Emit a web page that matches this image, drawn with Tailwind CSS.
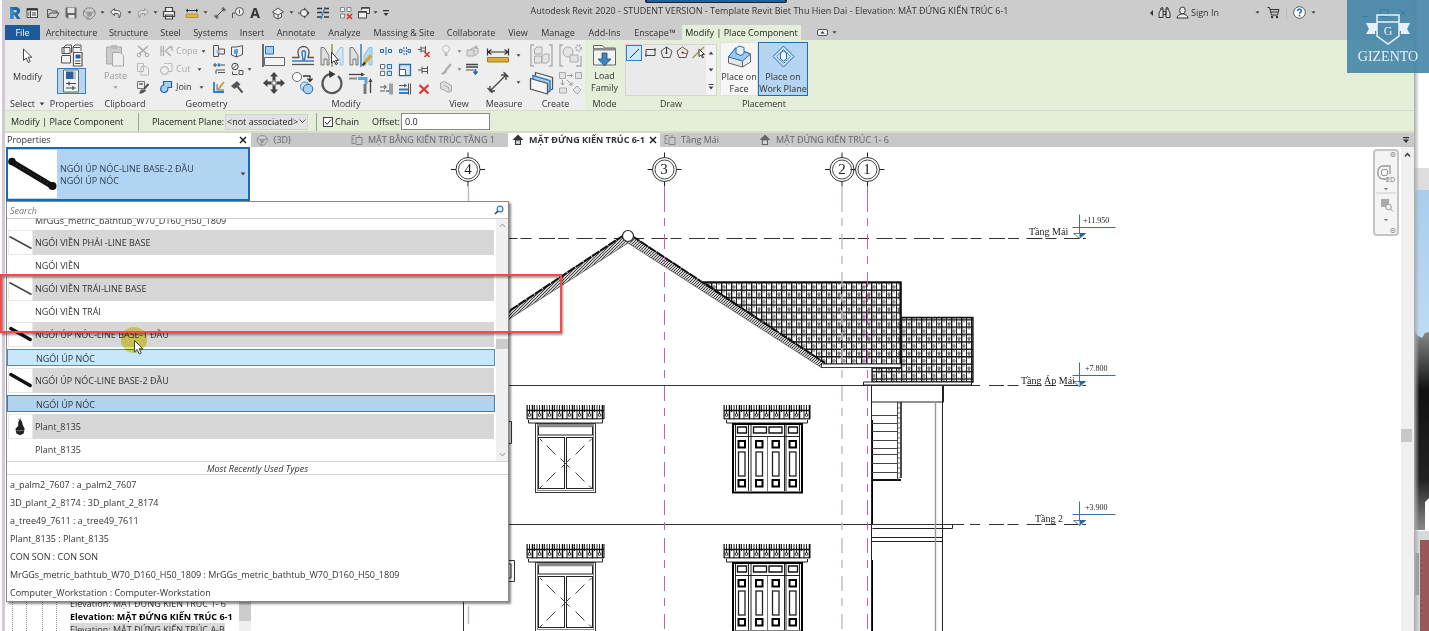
<!DOCTYPE html>
<html lang="vi">
<head>
<meta charset="utf-8">
<title>Autodesk Revit 2020</title>
<script src="https://cdn.jsdelivr.net/npm/@tailwindcss/browser@4"></script>
</head>
<body class="relative flex h-screen overflow-hidden bg-white font-['Open_Sans','Noto_Sans',sans-serif] text-[9px] leading-[12px] text-[#333]">

<svg class="absolute size-0">
  <defs>
    <symbol id="caret" viewBox="0 0 5 5"><path d="M0.5 1.2h4L2.5 3.8z" fill="#444"/></symbol>
    <symbol id="house" viewBox="0 0 12 12"><path d="M6 0.5L0.5 6H3v5h6V6h2.500z" fill="currentColor"/><path d="M4 6.500h4v3.500H4z" fill="#fff" opacity=".75"/></symbol>
    <symbol id="plan" viewBox="0 0 12 12"><path d="M4.500 1.500H1v8h3M5 3.500h6v7H5zM8 1v3M1 5h2" fill="none" stroke="#888"/></symbol>
    <symbol id="cube" viewBox="0 0 14 14"><path d="M1.500 5L5 2h5l3 3v4l-4 4H5L1.500 9z" fill="#ccc" stroke="#888"/><path d="M1.500 5l4 2h4L13 5M6 7v6" fill="none" stroke="#888"/><circle cx="7.500" cy="8" r="2.500" fill="#999"/></symbol>
    <pattern id="tiles" width="10" height="14.800" patternUnits="userSpaceOnUse" patternTransform="translate(701 282)">
      <rect width="10" height="14.800" fill="#fff"/>
      <path d="M0 .8h10M0 8.200h10" stroke="#111" stroke-width="1.500"/>
      <path d="M.6 0v15" stroke="#111" stroke-width="1.500"/><path d="M5.500 0v15" stroke="#222"/>
      <path d="M8 0v3M3 8v3M8 12v3" stroke="#333" stroke-width=".8"/>
      <circle cx="3" cy="4.800" r="1.200" fill="none" stroke="#333" stroke-width=".8"/>
      <circle cx="8" cy="12" r="1.200" fill="none" stroke="#333" stroke-width=".8"/>
    </pattern>
    <pattern id="hatch" width="3" height="3" patternUnits="userSpaceOnUse"><rect width="3" height="3" fill="#ccc"/><path d="M0 3L3 0" stroke="#444"/></pattern>
    <pattern id="awning" width="10" height="15" patternUnits="userSpaceOnUse">
      <path d="M1 0v15M3.500 0v9M8.500 0v7" stroke="#222"/><path d="M6.500 0v15" stroke="#000" stroke-width="1.500"/><circle cx="3.500" cy="10" r="1.400" fill="none" stroke="#222"/><path d="M0 5.500h10M0 14h10" stroke="#111" stroke-width="1.300"/>
    </pattern>
    <symbol id="window" viewBox="0 0 80 90" overflow="visible">
      <rect x="1" y="0" width="77" height="14.500" fill="url(#awning)"/>
      <path d="M1 0v14M78 0v14" stroke="#111"/>
      <path d="M2.500 15v3h74v-3" fill="#fff" stroke="#222"/>
      <rect x="9.500" y="18.500" width="60" height="69" fill="#fff" stroke="#333"/>
      <rect x="11.500" y="19.500" width="56" height="66" fill="none" stroke="#888"/>
      <rect x="12.500" y="21" width="54" height="9" fill="#fff" stroke="#222"/>
      <path d="M12.500 21.300h54" stroke="#888" stroke-width="2"/>
      <rect x="12.500" y="32.500" width="26" height="51" fill="#fff" stroke="#222"/>
      <rect x="40.500" y="32.500" width="26" height="51" fill="#fff" stroke="#222"/>
      <path d="M14 34l2.500 2.500M20.500 40.500l9 9M34.500 53.500l9 9M65.500 34l-2.500 2.500M58.500 40.500l-9 9M44.500 53.500l-9 9M14 83l2.500-2.500M20.500 76.500l9-9M65.500 83l-2.500-2.500M58.500 76.500l-9-9" stroke="#444"/>
    </symbol>
    <g id="leaf"><rect x="1" y="36" width="6.500" height="6.500" fill="#fff" stroke="#000" stroke-width="2"/><rect x="1" y="47" width="6.500" height="24" fill="#fff" stroke="#222" stroke-width="1.300"/><rect x="1" y="75" width="6.500" height="6.500" fill="#fff" stroke="#000" stroke-width="2"/></g>
    <symbol id="door" viewBox="0 0 90 90" overflow="visible">
      <rect x="1" y="0" width="86" height="14.500" fill="url(#awning)"/>
      <path d="M1 0v14M87 0v14" stroke="#111"/>
      <path d="M3.500 15v3h81v-3" fill="#fff" stroke="#222"/>
      <rect x="10" y="19" width="69" height="68.500" fill="#fff" stroke="#000" stroke-width="2"/>
      <path d="M12.500 31.500h64M12.500 20v66M76.500 20v66M25.500 20v66M28 20v66M61.500 20v66M63 20v66" stroke="#222" fill="none"/>
      <path d="M44.500 32v54" stroke="#777"/>
      <path d="M14.500 22h9v6h-9zM30.500 22h13v6h-13zM46 22h13v6H46zM65.500 22h9v6h-9z" fill="#fff" stroke="#111" stroke-width="1.300"/>
      <use href="#leaf" x="14.500"/><use href="#leaf" x="32"/><use href="#leaf" x="48.500"/><use href="#leaf" x="65.500"/>
    </symbol>
    <g id="bubble"><circle r="12" fill="#fff" stroke="#333"/><circle r="9.500" fill="#fff" stroke="#333" stroke-width=".9"/><path d="M-17 0h5M12 0h5M0-17v5M0 12v5" stroke="#222"/></g>
    <g id="level"><path d="M0-24V0M-7-11h43" stroke="#3f6f9c" fill="none"/><path d="M-6-5H6L0 0z" fill="#fff" stroke="#2d6698" stroke-width=".8"/><path d="M0-5.500h6.500L0 0z" fill="#2369a5"/></g>
    <symbol id="beam-thin" viewBox="0 0 25 25"><path d="M0.500 6l24 13" stroke="#444" stroke-width="1.600"/></symbol>
    <symbol id="beam-thick" viewBox="0 0 25 25"><path d="M2 6l21 12" stroke="#111" stroke-width="3.600" stroke-linecap="round"/></symbol>
  </defs>
</svg>

<div class="w-[2px] shrink-0 bg-white"></div>
<div class="w-[3px] shrink-0 bg-[#d3cad6]"></div>

<main class="flex min-w-0 flex-1 flex-col">
  <!-- Title bar -->
  <header class="flex h-[25px] shrink-0 items-center bg-[#ccc] pl-[3px]">
    <button aria-label="Revit"><svg class="size-[14px]" viewBox="0 0 14 14"><path d="M2 1h6c5 0 5.500 6 1.500 7.500L12.500 13H9L6.500 9H5.500v4H2zm3.500 3v2.500H7.500c1.700 0 1.700-2.500 0-2.500z" fill="#1f66a8" fill-rule="evenodd"/><path d="M2 1l3.500 3v9H2z" fill="#3b8bcb"/></svg></button>
    <button aria-label="Home" class="ml-[3px]"><svg class="size-[14px]" viewBox="0 0 14 14"><path d="M2 2.500h10.500v9H2z" fill="#eee" stroke="#444"/><path d="M2 3h10.500v1.500H2z" fill="#333"/><path d="M5.500 5v6M7 7h4M7 9h4M3 7h1.500M3 9h1.500" fill="none" stroke="#444"/></svg></button>
    <button aria-label="Open" class="ml-[7px]"><svg class="size-[14px]" viewBox="0 0 14 14"><path d="M1.500 11.500v-8h3.500l1 1.500h5v2M1.500 11.500L4 7h9l-2.500 4.500z" fill="none" stroke="#555"/></svg></button>
    <button aria-label="Save" class="ml-1"><svg class="size-[14px]" viewBox="0 0 14 14"><path d="M1.500 1.500h11v11h-9l-2-2z" fill="#666"/><path d="M3.500 2h7v5h-7zM4.500 9h6v3.500h-6z" fill="#e4e4e4"/></svg></button>
    <button aria-label="Sync" class="ml-1"><svg class="size-[14px]"><use href="#cube"/></svg></button>
    <svg class="ml-1 size-[5px]"><use href="#caret"/></svg>
    <button aria-label="Undo" class="ml-1"><svg class="size-[14px]" viewBox="0 0 14 14"><path d="M1.500 6L5.500 2.500v2h3c4 .5 4 4.500 1.500 7.500C10.500 9 9.500 7.500 8 7.500H5.500v2z" fill="#eee" stroke="#555"/></svg></button>
    <svg class="ml-1 size-[5px]"><use href="#caret"/></svg>
    <button aria-label="Redo" class="ml-1"><svg class="size-[14px]" viewBox="0 0 14 14"><path d="M12.500 6L8.500 2.500v2h-3C1.500 5 1.500 9 4 12 3.500 9 4.500 7.500 6 7.500h2.500v2z" fill="#ddd" stroke="#999"/></svg></button>
    <svg class="ml-[3px] size-[5px]"><use href="#caret"/></svg>
    <button aria-label="Print" class="ml-1"><svg class="size-[14px]" viewBox="0 0 14 14"><path d="M3.500 5V1.500h7V5M1.500 5.500h11v5h-11zM3.500 9h7v4h-7z" fill="#eee" stroke="#444" stroke-width="1.200"/></svg></button>
    <button aria-label="Measure" class="ml-[9px]"><svg class="size-[14px]" viewBox="0 0 14 14"><path d="M1 4.500h12M3 3L1 4.500 3 6M11 3l2 1.500L11 6" stroke="#333" fill="none"/><path d="M1 8h12v3.500H1z" fill="#e0b43a" stroke="#9a7a20" stroke-width=".6"/></svg></button>
    <svg class="ml-1 size-[5px]"><use href="#caret"/></svg>
    <button aria-label="Aligned dimension" class="ml-[5px]"><svg class="size-[14px]" viewBox="0 0 14 14"><path d="M3 11L11 3M1 9.500l3.500 3.500M9.500 1l3.500 3.500M3 8.500V11h2.500M8.500 3H11v2.500" stroke="#444" fill="none"/></svg></button>
    <button aria-label="Tag" class="ml-1"><svg class="size-[14px]" viewBox="0 0 14 14"><circle cx="8.500" cy="5.500" r="4" fill="#eee" stroke="#555"/><path d="M8.500 3.500v4M1.500 12V7h3" stroke="#555" fill="none"/></svg></button>
    <button aria-label="Text" class="ml-[3px] w-[14px] text-center text-[14px] leading-[14px] font-bold text-[#333]">A</button>
    <button aria-label="3D view" class="ml-[9px]"><svg class="size-[14px]" viewBox="0 0 14 14"><path d="M1.500 6L7 2l5.500 4-2 1v4L7 13l-4-2V7z" fill="#eee" stroke="#555"/><path d="M3 7l4 2 3.500-2M7 9v4" fill="none" stroke="#555"/></svg></button>
    <svg class="ml-1 size-[5px]"><use href="#caret"/></svg>
    <button aria-label="Section" class="ml-[3px]"><svg class="size-[14px]" viewBox="0 0 14 14"><path d="M7 1.500L12.500 7 7 12.500z" fill="#333"/><path d="M1 7h2" stroke="#444"/><circle cx="7" cy="7" r="3.500" fill="#eee" stroke="#444"/></svg></button>
    <button aria-label="Thin lines" class="ml-[5px]"><svg class="size-[14px]" viewBox="0 0 14 14"><path d="M1 2.500h5M8 2.500h5M1 6.500h5M8 6.500h5M1 11h5M8 11h5" stroke="#333" stroke-width="1.400"/><path d="M9 1L5 13" stroke="#2f7fc2" stroke-width="1.200"/></svg></button>
    <button aria-label="Close inactive views" class="ml-[9px]"><svg class="size-[14px]" viewBox="0 0 14 14"><path d="M1.500 1.500h4v4h-4zM8 1.500h4v4H8zM1.500 8h4v4h-4z" fill="#eee" stroke="#888"/><path d="M8 8l5 5M13 8l-5 5" stroke="#d33" stroke-width="1.700"/></svg></button>
    <button aria-label="Switch windows" class="ml-1"><svg class="size-[14px]" viewBox="0 0 14 14"><path d="M4.500 4V1.500h8v6h-3M1.500 5.500h8v6.500h-8z" fill="#eee" stroke="#444"/><path d="M1.500 6h8M4.500 2h8" stroke="#444" stroke-width="1.500"/></svg></button>
    <svg class="ml-0.5 size-[5px]"><use href="#caret"/></svg>
    <svg class="ml-1 h-[8px] w-[8px]" viewBox="0 0 8 8"><path d="M1 1h6v1.300H1zM1.500 4h5L4 7z" fill="#333"/></svg>

    <h1 class="min-w-0 flex-1 truncate pb-1 text-center">Autodesk Revit 2020 - STUDENT VERSION - Template Revit Biet Thu Hien Dai - Elevation: MẶT ĐỨNG KIẾN TRÚC 6-1</h1>

    <div class="flex w-[265px] shrink-0 items-center">
      <svg class="h-[6px] w-[5px]" viewBox="0 0 5 6"><path d="M4 0v6L1 3z" fill="#333"/></svg>
      <button aria-label="Search" class="ml-[4px]"><svg class="size-[13px]" viewBox="0 0 13 13"><path d="M1 11.500V7l2-4h2v8.500zM12 11.500V7l-2-4H8v8.500zM5 5.500h3v3H5M2.500 3l1-1.500h1L5 3M8 3l.5-1.500h1l1 1.500" fill="#ddd" stroke="#333"/></svg></button>
      <button class="ml-[5px] flex items-center gap-0.5"><svg class="size-[13px]" viewBox="0 0 13 13"><ellipse cx="6.500" cy="4.500" rx="2.800" ry="3.500" fill="#eee" stroke="#333"/><path d="M1 12c0-3 3-3 4-4h3c1 1 4 1 4 4z" fill="#eee" stroke="#333"/></svg>Sign In</button>
      <svg class="ml-auto size-[5px]"><use href="#caret"/></svg>
      <button aria-label="Cart" class="ml-[7px]"><svg class="size-[13px]" viewBox="0 0 13 13"><path d="M.5 1.500h2l2 7.500h6l1.500-5.500H3M4 6h7" fill="none" stroke="#333"/><circle cx="5" cy="11" r="1.200" fill="#333"/><circle cx="10" cy="11" r="1.200" fill="#333"/></svg></button>
      <span class="ml-[6px] h-[12px] w-px bg-[#bbb]"></span>
      <button aria-label="Help" class="ml-[6px]"><svg class="size-[13px]" viewBox="0 0 13 13"><circle cx="6.500" cy="6.500" r="5.800" fill="#fff" stroke="#555"/><path d="M4.700 5c0-2.600 3.800-2.400 3.600 0 0 1.300-1.800 1.300-1.800 2.800M6.500 8.800v1.600" fill="none" stroke="#1d62a8" stroke-width="1.500"/></svg></button>
      <svg class="ml-[5px] size-[5px]"><use href="#caret"/></svg>
      <div class="ml-[44px] flex items-center gap-[9px] pr-[6px]">
        <button aria-label="Minimize"><svg class="size-[10px]" viewBox="0 0 10 10"><path d="M2 8.500h6" stroke="#222"/></svg></button>
        <button aria-label="Maximize"><svg class="size-[10px]" viewBox="0 0 10 10"><path d="M1 1.500h8v7H1z" stroke="#222" fill="none"/></svg></button>
        <button aria-label="Close"><svg class="size-[10px]" viewBox="0 0 10 10"><path d="M1.500 1.500l7 7M8.500 1.500l-7 7" stroke="#222"/></svg></button>
      </div>
    </div>
  </header>

  <!-- Ribbon tabs -->
  <nav class="flex h-[15px] shrink-0 items-center bg-[#ccc] text-center whitespace-nowrap">
    <a href="#" class="w-[35px] bg-[#1d5a9a] leading-[15px] text-white">File</a>
    <a href="#" class="w-[63px]">Architecture</a>
    <a href="#" class="w-[51px]">Structure</a>
    <a href="#" class="w-[33px]">Steel</a>
    <a href="#" class="w-[47px]">Systems</a>
    <a href="#" class="w-[36px]">Insert</a>
    <a href="#" class="w-[52px]">Annotate</a>
    <a href="#" class="w-[45px]">Analyze</a>
    <a href="#" class="w-[74px]">Massing &amp; Site</a>
    <a href="#" class="w-[60px]">Collaborate</a>
    <a href="#" class="w-[34px]">View</a>
    <a href="#" class="w-[46px]">Manage</a>
    <a href="#" class="w-[47px]">Add-Ins</a>
    <a href="#" class="w-[54px]">Enscape™</a>
    <a href="#" class="w-[119px] bg-[#e4eed8] leading-[15px] text-[#222]">Modify | Place Component</a>
    <button aria-label="Ribbon display" class="ml-4 flex items-center gap-1"><svg class="h-[7px] w-[11px]" viewBox="0 0 11 7"><rect x=".5" y=".5" width="10" height="6" rx="1.500" fill="#eee" stroke="#555"/><path d="M3.500 4.500h4l-2-2.500z" fill="#333"/></svg><svg class="size-[5px]"><use href="#caret"/></svg></button>
  </nav>

  <!-- Ribbon panels -->
  <section class="flex h-[70px] shrink-0 bg-[#e4eed8] text-center whitespace-nowrap">
    <div class="flex bg-[#eee]">
      <div class="flex w-[45px] flex-col items-center pt-[6px]">
        <button class="flex flex-col items-center gap-[6px]"><svg class="h-[19px] w-[14px]" viewBox="0 0 14 19"><path d="M3.500 3v11.500l2.700-2.500 2 4.500 2-1-2-4.300h3.600z" fill="#fff" stroke="#444"/></svg>Modify</button>
        <span class="mt-auto flex items-center gap-1">Select <svg class="size-[6px]"><use href="#caret"/></svg></span>
      </div>
      <div class="flex w-[43px] flex-col items-center pt-[3px]">
        <button aria-label="Type properties"><svg class="h-[25px] w-[24px]" viewBox="0 0 24 25"><path d="M4 10V4l2-2h5.500v7.500l-1.500 1H2V4.500h8V10M13 9V4l2-2h6v6M13 4.500h7M2 12.500h8.500V20H1.500v-6z" fill="#f2f2f2" stroke="#555"/><path d="M13.500 9.500h8.500V23h-8.500z" fill="#fff" stroke="#555" stroke-width="1.200"/><path d="M15.500 11.500h5v4h-5z" fill="#2a5f97"/><path d="M15 18h5.500M15 20.500h5.500" stroke="#444"/></svg></button>
        <button aria-label="Properties palette" class="flex h-[26px] w-[29px] items-center justify-center border border-[#3c7fb8] bg-[#b9d7f1]"><svg class="h-[24px] w-[19px]" viewBox="0 0 19 24"><path d="M1.500 1h15v22h-15z" fill="#f4f4f4" stroke="#666"/><path d="M4 2.500h7.500V10H4z" fill="#2a5f97"/><path d="M12 2.500h2V10h-2z" fill="#b5c3d0"/><path d="M4 14.500h10M4 19h10M7 12.500v4M11 17v4" stroke="#444" stroke-width="1.200"/></svg></button>
        <span class="mt-auto">Properties</span>
      </div>
      <div class="flex w-[64px] flex-col items-center">
        <div class="flex w-full justify-between pt-[4px] pr-[7px] pl-[11px]">
          <button class="flex flex-col items-center gap-[3px] text-[#999]"><svg class="h-[23px] w-[20px]" viewBox="0 0 20 23"><path d="M1.500 3h15v17h-15z" fill="#ccc" stroke="#aaa"/><path d="M6 1h6v4H6z" fill="#bbb"/><path d="M7.500 8.500h8l3 3V22h-11z" fill="#eee" stroke="#aaa"/></svg><span>Paste</span><svg class="size-[5px] opacity-50"><use href="#caret"/></svg></button>
          <div class="flex flex-col gap-1">
            <button aria-label="Cut to clipboard"><svg class="size-[14px]" viewBox="0 0 14 14"><path d="M2 2l9 8M12 2l-9 8" stroke="#aaa" stroke-width="1.400"/><circle cx="3" cy="11" r="1.800" fill="none" stroke="#aaa"/><circle cx="11" cy="11" r="1.800" fill="none" stroke="#aaa"/></svg></button>
            <button aria-label="Copy to clipboard"><svg class="size-[14px]" viewBox="0 0 14 14"><path d="M1.500 1.500h6v8h-6zM5 4.500h5l2.500 2.500v6H5z" fill="#eee" stroke="#bbb"/></svg></button>
            <button aria-label="Match type"><svg class="size-[14px]" viewBox="0 0 14 14"><path d="M1.500 1.500h7v7h-7z" fill="#eee" stroke="#777"/><path d="M3 3h4v2H3z" fill="#888"/><path d="M12.500 4L8 9" stroke="#555" stroke-width="2"/><path d="M5 9.500h4L10 11l-4 2.500H3z" fill="#555"/></svg></button>
          </div>
        </div>
        <span class="mt-auto">Clipboard</span>
      </div>
      <div class="flex w-[99px] flex-col items-center">
        <div class="grid w-full grid-cols-[53px_18px_17px_8px] items-center gap-y-1 pt-[4px] pl-[2px]">
          <button class="flex items-center gap-[3px] text-[#aaa]"><svg class="size-[14px]" viewBox="0 0 14 14"><path d="M2 2v10M4.500 2v10M2 7h3M12 2L6.500 7l5.500 5M10 3h3v4" fill="none" stroke="#aaa" stroke-width="1.200"/></svg>Cope<svg class="size-[5px]"><use href="#caret"/></svg></button>
          <button aria-label="Cut profile"><svg class="size-[14px]" viewBox="0 0 14 14"><path d="M1.500 1.500h5v11h-5zM6.500 5h6v5h-6z" fill="#e8e8e8" stroke="#555"/><path d="M4.500 6.500h3v2.500h-3z" fill="#8db4d8"/></svg></button>
          <button aria-label="Opening"><svg class="size-[14px]" viewBox="0 0 14 14"><path d="M1.500 3h5l6-1.500v9L6.500 13l-5-2z" fill="#e8eef4" stroke="#555"/><path d="M6.500 5v8" stroke="#555"/><path d="M4 5.500l4-.5v4.500l-4 .7z" fill="#5f9fd4"/></svg></button><span></span>
          <button class="flex items-center gap-[3px] text-[#aaa]"><svg class="size-[14px]" viewBox="0 0 14 14"><path d="M5 1.500h8v8H9.500" fill="none" stroke="#bbb"/><circle cx="5.500" cy="8.500" r="4" fill="#eee" stroke="#aaa"/></svg>Cut<svg class="ml-1 size-[5px]"><use href="#caret"/></svg></button>
          <button aria-label="Beam joins"><svg class="size-[14px]" viewBox="0 0 14 14"><path d="M1 3h4M3 1v4M9 3h4" stroke="#444"/><path d="M5.500 1.500h3v3h-3z" fill="#2f7fc2"/><path d="M4 12V8h9M6 10.500h7" fill="none" stroke="#555"/></svg></button>
          <button aria-label="Unjoin"><svg class="size-[14px]" viewBox="0 0 14 14"><circle cx="5" cy="4.500" r="3.200" fill="#eee" stroke="#444"/><path d="M3 6.500l4-4M2.500 9.500v3h5M9 8.500h4v4H9z" fill="none" stroke="#555"/></svg></button>
          <svg class="size-[5px]"><use href="#caret"/></svg>
          <button class="flex items-center gap-[3px]"><svg class="size-[14px]" viewBox="0 0 14 14"><path d="M4.500 1.500h8v6H9c0 3-1 5-4 5s-4-3-3-5c0-1 1-2 2.500-2z" fill="#a5cdf0" stroke="#2266a5" stroke-width="1.200"/></svg>Join<svg class="ml-1 size-[5px]"><use href="#caret"/></svg></button>
          <button aria-label="Split face"><svg class="size-[14px]" viewBox="0 0 14 14"><path d="M2 2v10h10" stroke="#2f7fc2" stroke-width="1.800" fill="none"/><path d="M5 4v6h7" stroke="#666" fill="none"/><path d="M12 2L6.500 9" stroke="#c49a2b" stroke-width="1.800"/></svg></button>
          <button aria-label="Demolish"><svg class="size-[14px]" viewBox="0 0 14 14"><path d="M1 6l6-5 3.500 3.500L4.500 9z" fill="#555"/><path d="M7 6l5.500 6.500" stroke="#555" stroke-width="2"/></svg></button><span></span>
        </div>
        <span class="mt-auto">Geometry</span>
      </div>
      <div class="flex w-[180px] flex-col items-center">
        <div class="flex w-full pt-[3px] pl-[5px]">
          <div class="grid grid-cols-4 gap-x-[3px] gap-y-[1px]">
            <button aria-label="Align"><svg class="size-[26px]" viewBox="0 0 26 26"><path d="M2 1v23" stroke="#222" stroke-width="1.300"/><path d="M4.500 3.500h8v7.500h-8z" fill="#a9cff0" stroke="#2b6ca8"/><path d="M3.500 14.500h20v8h-20z" fill="#f4f4f4" stroke="#666"/></svg></button>
            <button aria-label="Offset"><svg class="size-[26px]" viewBox="0 0 26 26"><path d="M2 14.500h7c.5-1-1-2-1-5 0-8 11-8 11 0 0 3-1.500 4-1 5h6" fill="none" stroke="#555" stroke-width="1.300"/><path d="M2 18h11c0-4-1-5-1-8 0-3 3.500-3 3.500 0 0 3-1 4-1 8H24" fill="none" stroke="#2f7fc2" stroke-width="1.500"/><path d="M2 21.500h22" stroke="#555" stroke-width="1.300"/></svg></button>
            <button aria-label="Mirror by axis"><svg class="size-[26px]" viewBox="0 0 26 26"><path d="M2 4.500h3l5 8V22H8v-6H5v6H2z" fill="#e0e0e0" stroke="#777"/><path d="M24 4.500h-3l-5 8V22h2v-6h3v6h3z" fill="#d2e6f7" stroke="#a5c4de"/><path d="M13 1v23" stroke="#8a9a5a" stroke-width="1.500"/><path d="M12.500 9v11l2.500-2.200 2 3.700 1.500-1-2-3.200h3z" fill="#fff" stroke="#333"/></svg></button>
            <button aria-label="Mirror by line"><svg class="size-[26px]" viewBox="0 0 26 26"><path d="M2 4.500h3l5 8V22H8v-6H5v6H2z" fill="#e0e0e0" stroke="#777"/><path d="M24 4.500h-3l-5 8V22h2v-6h3v6h3z" fill="#b9d9f2" stroke="#93bbdc"/><path d="M13 1v23" stroke="#2f7fc2" stroke-width="1.500"/><path d="M23 12.500l-7 8" stroke="#d0a732" stroke-width="3.400"/><path d="M17 19.500l-2.500 3" stroke="#333" stroke-width="2"/></svg></button>
            <button aria-label="Move"><svg class="size-[26px]" viewBox="0 0 26 26"><path d="M13 2l4 4.500h-2.500v4h-3v-4H9zM13 24l4-4.500h-2.500v-4h-3v4H9zM2 13l4.500-4v2.500h4v3h-4V17zM24 13l-4.500-4v2.500h-4v3h4V17z" fill="#444"/><path d="M11 11h4v4h-4z" fill="#fff" stroke="#666"/></svg></button>
            <button aria-label="Copy"><svg class="size-[26px]" viewBox="0 0 26 26"><circle cx="7" cy="7" r="4.500" fill="#fff" stroke="#666"/><path d="M13 6h7v4M17.500 8.500L20 11.500l2.500-3" fill="none" stroke="#333" stroke-width="1.300"/><circle cx="15" cy="16.500" r="4.500" fill="#cfe5f8" stroke="#3c7fb8"/><circle cx="18" cy="19" r="4.800" fill="#a9d0f0" stroke="#2b6ca8"/></svg></button>
            <button aria-label="Rotate"><svg class="size-[26px]" viewBox="0 0 26 26"><path d="M19 6.200A9.500 9.500 0 1 1 11 4.200" fill="none" stroke="#555" stroke-width="2.200"/><path d="M10 0.500l6.500 3.700L10.500 8z" fill="#333"/></svg></button>
            <button aria-label="Trim"><svg class="size-[26px]" viewBox="0 0 26 26"><path d="M1 4.500h14" stroke="#444" stroke-width="1.300"/><path d="M13 2.500l4 2-4 2z" fill="#444"/><path d="M1 8.500h8" stroke="#888" stroke-width="2"/><path d="M10 8.500h8V14" fill="none" stroke="#5fa4dc" stroke-width="3"/><path d="M17 14v10" stroke="#777" stroke-width="3"/><path d="M22.500 23V11" stroke="#444" stroke-width="1.300"/><path d="M20.500 12l2-4 2 4z" fill="#444"/></svg></button>
          </div>
          <div class="ml-[5px] grid grid-cols-3 gap-x-[5px] gap-y-1 pt-[1px]">
            <button aria-label="Split"><svg class="size-[14px]" viewBox="0 0 14 14"><path d="M1.500 5.500h3v3h-3zM9.500 5.500h3v3h-3z" fill="#cfe5f8" stroke="#2b6ca8"/><path d="M7 3v8" stroke="#2b6ca8"/></svg></button>
            <button aria-label="Split with gap"><svg class="size-[14px]" viewBox="0 0 14 14"><path d="M1.500 5.500h2.500v3h-2.500zM10 5.500h2.500v3H10z" fill="#cfe5f8" stroke="#2b6ca8"/><path d="M6 3v8M8.500 3v8" stroke="#2b6ca8" stroke-dasharray="2 1"/></svg></button>
            <button aria-label="Unpin"><svg class="size-[14px]" viewBox="0 0 14 14"><path d="M1 5.500h3M4 2.500v6M4 4h4M4 7h4M8.500 2v7" fill="none" stroke="#555"/><path d="M7.500 8l5 5M12.500 8l-5 5" stroke="#d33" stroke-width="1.700"/></svg></button>
            <button aria-label="Array"><svg class="size-[14px]" viewBox="0 0 14 14"><path d="M1.500 1.500h4.200v4.200H1.500zM1.500 8.300h4.200v4.200H1.500z" fill="#fff" stroke="#667"/><path d="M8.300 1.500h4.200v4.200H8.300zM8.300 8.300h4.200v4.200H8.300z" fill="#cfe5f8" stroke="#2b6ca8"/></svg></button>
            <button aria-label="Scale"><svg class="size-[14px]" viewBox="0 0 14 14"><path d="M1.500 1.500h11v11h-11z" fill="#cfe5f8" stroke="#2b6ca8" stroke-width="1.300"/><path d="M1.500 6.500h6v6h-6z" fill="#fff" stroke="#555"/></svg></button>
            <button aria-label="Pin"><svg class="size-[14px]" viewBox="0 0 14 14"><path d="M1 7h4M5 3.500v7M5 5.500h5M5 8.500h5M10.500 3v8" fill="none" stroke="#555"/></svg></button>
            <button aria-label="Trim single"><svg class="size-[14px]" viewBox="0 0 14 14"><path d="M1 5h6M5 3l2.500 2L5 7M1 9h5" stroke="#555" fill="none"/><path d="M7 9h3" stroke="#2f7fc2" stroke-width="1.500"/><path d="M11 1.500v11M13 1.500v11" stroke="#555"/></svg></button>
            <button aria-label="Trim multiple"><svg class="size-[14px]" viewBox="0 0 14 14"><path d="M1 3.500h7M6 2l2.500 1.500L6 5" stroke="#555" fill="none"/><path d="M1 7.500h9M1 11h9" stroke="#2f7fc2" stroke-width="1.800"/><path d="M12.500 1.500v11M10.500 1.500v11" stroke="#555"/></svg></button>
            <button aria-label="Delete"><svg class="size-[14px]" viewBox="0 0 14 14"><path d="M2.500 3l9 8.500M11.500 3l-9 8.500" stroke="#df3b35" stroke-width="2.400"/></svg></button>
          </div>
        </div>
        <span class="mt-auto">Modify</span>
      </div>
      <div class="flex w-[46px] flex-col items-center">
        <div class="grid w-full grid-cols-[14px_12px_14px] items-center gap-y-1 pt-[4px] pl-[3px]">
          <button aria-label="Hide"><svg class="size-[14px]" viewBox="0 0 14 14"><circle cx="7" cy="5" r="3.500" fill="#f2f2f2" stroke="#bbb"/><path d="M5.500 9h3v3h-3z" fill="#bbb"/></svg></button>
          <svg class="mx-auto size-[5px] opacity-60"><use href="#caret"/></svg>
          <button aria-label="Displace"><svg class="size-[14px]" viewBox="0 0 14 14"><path d="M2 6h7v6H2zM5 6l2-2h6v5l-3 3" fill="#ddd" stroke="#aaa"/><circle cx="11" cy="3" r="1.500" fill="#aaa"/></svg></button>
          <button aria-label="Override"><svg class="size-[14px]" viewBox="0 0 14 14"><path d="M12 2L7 8" stroke="#aaa" stroke-width="2"/><path d="M7 7l-5 5c2 1 5 0 6-3z" fill="#aaa"/></svg></button>
          <svg class="mx-auto size-[5px] opacity-60"><use href="#caret"/></svg>
          <button aria-label="Linework"><svg class="size-[14px]" viewBox="0 0 14 14"><path d="M1 2.500h12M1 5h12" stroke="#444" stroke-width="1.400"/><path d="M1 8h8" stroke="#555"/><path d="M10.500 7v4M8.500 9.500l2 2.500 2-2.500" fill="none" stroke="#2266a5" stroke-width="1.600"/></svg></button>
          <button aria-label="Section box"><svg class="size-[14px]" viewBox="0 0 14 14"><path d="M1.500 3l4-1.500 7 4V11l-3 1.500-8-4z" fill="#ddd" stroke="#aaa"/><path d="M5 5l5 3v3" fill="none" stroke="#aaa"/></svg></button>
        </div>
        <span class="mt-auto">View</span>
      </div>
      <div class="flex w-[44px] flex-col items-center">
        <div class="grid w-full grid-cols-[26px_12px] items-center gap-y-[2px] pt-[3px] pl-[4px]">
          <button aria-label="Measure distance"><svg class="h-[25px] w-[24px]" viewBox="0 0 24 25"><path d="M2 9h20M5.500 6.500L2 9l3.500 2.500M18.500 6.500L22 9l-3.500 2.500M1.500 5.500v7M22.500 5.500v7" fill="none" stroke="#333" stroke-width="1.200"/><path d="M1.500 14.500h21v4.500h-21z" fill="#d9ae36" stroke="#8a6a10" stroke-width=".8"/></svg></button>
          <svg class="mx-auto size-[5px]"><use href="#caret"/></svg>
          <button aria-label="Dimension"><svg class="h-[25px] w-[24px]" viewBox="0 0 24 25"><path d="M4 21L20 5M4 16v5h5M15 5h5v5M1.500 18l5 5M17.500 2l5 5" fill="none" stroke="#444" stroke-width="1.300"/></svg></button>
          <svg class="mx-auto size-[5px]"><use href="#caret"/></svg>
        </div>
        <span class="mt-auto">Measure</span>
      </div>
      <div class="flex w-[59px] flex-col items-center">
        <div class="grid grid-cols-2 gap-x-[4px] gap-y-[2px] pt-[3px]">
          <button aria-label="Create assembly"><svg class="size-[25px]" viewBox="0 0 25 25"><path d="M5 2H2v21h3M20 2h3v21h-3" fill="none" stroke="#aaa" stroke-width="1.300"/><path d="M5.500 6L8 4h5v7h-7.500zM5.500 13h7v7h-7zM13 13l2-2h5v7l-2 2h-5z" fill="#e4e4e4" stroke="#aaa"/></svg></button>
          <button aria-label="Create parts"><svg class="size-[25px]" viewBox="0 0 25 25"><path d="M5 2H2v21h3M18 23h5V13" fill="none" stroke="#aaa" stroke-width="1.300"/><circle cx="10" cy="9" r="5" fill="#e4e4e4" stroke="#aaa"/><path d="M12 12h8v7h-8z" fill="#e4e4e4" stroke="#aaa"/><circle cx="20.500" cy="5" r="2.600" fill="none" stroke="#aaa" stroke-width="1.800" stroke-dasharray="1.500 1"/></svg></button>
          <button aria-label="Create group"><svg class="size-[25px]" viewBox="0 0 25 25"><path d="M6.500 6V2.500l17 5V19l-2 1" fill="#f4f4f4" stroke="#555" stroke-width="1.300"/><path d="M4 9V5.500l17 5V21l-2 1" fill="#a5cdf0" stroke="#2f7fc2" stroke-width="1.500"/><path d="M1.500 8.500l17 5V24l-17-5z" fill="#f5f5f5" stroke="#555" stroke-width="1.300"/></svg></button>
          <button aria-label="Create similar"><svg class="size-[25px]" viewBox="0 0 25 25"><path d="M1.500 2.500h6v6h-6zM17.500 2.500h6v6h-6zM1.500 18h7v5h-7zM19 16l4 4-4 4-4-4z" fill="#e4e4e4" stroke="#aaa"/><path d="M9 5.500h5M12.500 3.500l2 2-2 2M4.500 10v5M2.500 13l2 2 2-2M9 10l5 5M14 12v3h-3" fill="none" stroke="#999"/></svg></button>
        </div>
        <span class="mt-auto">Create</span>
      </div>
    </div>
    <div class="flex w-[39px] flex-col items-center pt-[3px]">
      <button class="flex flex-col items-center gap-[2px]"><svg class="size-[25px]" viewBox="0 0 25 25"><path d="M1.500 22V2.500h9l2 2.500h11v17z" fill="#f2f2f2" stroke="#666"/><path d="M1.500 5h22v2.500h-22z" fill="#888"/><path d="M10 10h5v6h4l-6.500 7L6 16h4z" fill="#3d84bb" stroke="#1d4f80" stroke-width=".8"/></svg><span>Load<br>Family</span></button>
      <span class="mt-auto">Mode</span>
    </div>
    <div class="flex w-[94px] flex-col items-center pt-[4px]">
      <div class="flex h-[52px] w-[92px] justify-between border border-[#d5d5d5] bg-[#eaeaea]">
        <div class="flex gap-[1px]">
          <button aria-label="Line" class="flex size-[16px] items-center justify-center border border-[#3c7fb8] bg-[#cde8f8]"><svg class="size-[13px]" viewBox="0 0 13 13"><path d="M2 11L11 2" stroke="#333"/></svg></button>
          <button aria-label="Rectangle" class="self-start"><svg class="size-[15px]" viewBox="0 0 15 15"><path d="M3 4.500h9v6H3z" fill="none" stroke="#444"/><path d="M2 9.500h2v2H2zM11 3.500h2v2h-2z" fill="#555"/></svg></button>
          <button aria-label="Inscribed polygon" class="self-start"><svg class="size-[15px]" viewBox="0 0 15 15"><path d="M7.500 2l5.500 4-2 6.500H4L2 6z" fill="none" stroke="#555"/><path d="M7.500 2v6" stroke="#333"/><circle cx="7.500" cy="8" r="1" fill="#333"/></svg></button>
          <button aria-label="Circumscribed polygon" class="self-start"><svg class="size-[15px]" viewBox="0 0 15 15"><path d="M7.500 2l5.500 4-2 6.500H4L2 6z" fill="none" stroke="#555"/><path d="M7.500 7.500L12 9" stroke="#c33"/><circle cx="7.500" cy="7.500" r="1" fill="#333"/></svg></button>
          <button aria-label="Pick lines" class="self-start"><svg class="size-[15px]" viewBox="0 0 15 15"><path d="M1.500 13L13 2" stroke="#a89a4b" stroke-width="1.600"/><path d="M8 4v7.500l2-1.500 1.500 3 1-.5L11 9.500h2.500z" fill="#fff" stroke="#444"/></svg></button>
        </div>
        <div class="flex w-[10px] shrink-0 flex-col justify-between bg-[#f4f4f4] py-[5px]">
          <button aria-label="Previous tools" class="mx-auto"><svg class="block size-[6px] rotate-180"><use href="#caret"/></svg></button>
          <button aria-label="Next tools" class="mx-auto"><svg class="block size-[6px]"><use href="#caret"/></svg></button>
          <button aria-label="All tools" class="mx-auto"><svg class="block size-[6px]" viewBox="0 0 6 6"><path d="M.5 0h5v1h-5zM.5 2.500h5L3 5.500z" fill="#444"/></svg></button>
        </div>
      </div>
      <span class="mt-auto">Draw</span>
    </div>
    <div class="flex w-[92px] flex-col items-center pt-[2px]">
      <div class="flex h-[54px] w-[88px]">
        <button class="flex w-[38px] flex-col items-center justify-between border border-[#e2e2e2] bg-[#f6f6f6] pt-[1px]"><svg class="size-[25px]" viewBox="0 0 25 25"><path d="M1.500 13l7-9 15 6v8l-8 5-14-4z" fill="#e8e8e8" stroke="#666"/><path d="M1.500 13l7-9 15 6-8 7z" fill="#9ccaef" stroke="#2b6ca8"/><path d="M9 4.500l3-2.500 5 1.500v6l-3 2-5-2z" fill="#e3f1fc" stroke="#2b6ca8"/><path d="M15.500 17v6" stroke="#666"/></svg><span>Place on<br>Face</span></button>
        <button class="flex w-[50px] flex-col items-center justify-between border border-[#1f6cb0] bg-[#b5d5f2] pt-[1px]"><svg class="size-[25px]" viewBox="0 0 25 25"><path d="M12.500 2l10.500 10.500L12.500 23 2 12.500z" fill="#c7e0f5" stroke="#2b6ca8"/><path d="M12.500 5.500l7 7-7 7-7-7z" fill="none" stroke="#2b6ca8" stroke-dasharray="1.500 1"/><path d="M9.500 9l3-2 3 2v6l-3 2-3-2z" fill="#eef7ff" stroke="#2b6ca8"/></svg><span>Place on<br>Work Plane</span></button>
      </div>
      <span class="mt-auto">Placement</span>
    </div>
  </section>

  <!-- Options bar -->
  <form class="flex h-[23px] shrink-0 items-center border-t border-b-2 border-t-[#d6dacf] border-b-[#d5dcc6] bg-[#e4eed8] pt-px whitespace-nowrap text-[#222]">
    <span class="w-[133px] pl-[6px]">Modify | Place Component</span>
    <span class="h-[18px] w-px bg-[#9aa392]"></span>
    <label for="plane" class="w-[86px] pl-[13px]">Placement Plane:</label>
    <span class="relative flex items-center">
      <select id="plane" class="h-[16px] w-[83px] appearance-none border border-[#d2d2d2] bg-[#e2e3e0] pl-px leading-[12px]"><option>&lt;not associated&gt;</option></select>
      <svg class="pointer-events-none absolute right-[2px] h-[5px] w-[7px]" viewBox="0 0 7 5"><path d="M.5.5l3 3 3-3" fill="none" stroke="#555"/></svg>
    </span>
    <span class="ml-[8px] h-[18px] w-px bg-[#9aa392]"></span>
    <label class="ml-[6px] flex w-[49px] items-center gap-[2px]"><span class="relative flex"><input type="checkbox" checked class="size-[10px] appearance-none border border-[#444] bg-white"><svg class="pointer-events-none absolute inset-0 size-[10px]" viewBox="0 0 10 10"><path d="M2 5l2.200 2.300L8 2.500" fill="none" stroke="#222"/></svg></span>Chain</label>
    <label for="offset" class="w-[29px]">Offset:</label>
    <input id="offset" value="0.0" class="h-[17px] w-[89px] border border-[#888] bg-white pl-[3px]">
  </form>

  <!-- Work area -->
  <div class="flex min-h-0 flex-1">
    <aside class="flex w-[246px] shrink-0 flex-col bg-white">
      <div class="flex h-[14px] shrink-0 items-center justify-between pr-[4px] pl-[2px]"><h2>Properties</h2><button aria-label="Close properties"><svg class="size-[8px]" viewBox="0 0 8 8"><path d="M1 1l6 6M7 1L1 7" stroke="#222" stroke-width="1.500"/></svg></button></div>
      <button class="mx-px flex h-[54px] shrink-0 items-center border-2 border-[#1f6aac] bg-[#b1d4f3] pr-[2px] text-left text-[#2c3e50]">
        <svg class="h-[48px] w-[49px] bg-white" viewBox="0 0 49 48"><path d="M4 12l40 24" stroke="#111" stroke-width="6"/><path d="M5 12l39 24" stroke="#555" stroke-width="1" stroke-dasharray="1 3"/><circle cx="4" cy="11.500" r="3.800" fill="#111"/><circle cx="44.500" cy="36" r="4" fill="#111"/></svg>
        <span class="ml-[3px] flex-1 pt-px">NGÓI ÚP NÓC-LINE BASE-2 ĐẦU<br>NGÓI ÚP NÓC</span>
        <svg class="size-[6px]"><use href="#caret"/></svg>
      </button>
      <div class="mt-auto flex h-[34px] overflow-hidden">
        <div class="ml-[7px] flex w-[45px] justify-between border-x border-dotted border-[#999]"><span class="ml-[13px] border-l border-dotted border-[#999]"></span><span class="mr-[13px] border-l border-dotted border-[#999]"></span></div>
        <div class="flex flex-1 flex-col items-start pl-[13px] whitespace-nowrap">
          <span class="leading-[13px]">Elevation: MẶT ĐỨNG KIẾN TRÚC 1- 6</span>
          <span class="leading-[13px] font-bold text-black">Elevation: MẶT ĐỨNG KIẾN TRÚC 6-1</span>
          <span class="bg-[#d9d9d9] leading-[13px]">Elevation: MẶT ĐỨNG KIẾN TRÚC A-B</span>
        </div>
        <div class="w-[12px] bg-[#f0f0f0]"><div class="mt-[4px] h-[20px] bg-[#ccc]"></div></div>
      </div>
    </aside>

    <section class="relative flex min-w-0 flex-1 flex-col">
      <nav class="flex h-[14px] shrink-0 items-center bg-[#c8c8c8] whitespace-nowrap text-[#666]">
        <a href="#" class="flex w-[95px] items-center gap-[5px] pl-[5px]"><svg class="size-[12px]"><use href="#cube"/></svg>{3D}</a>
        <a href="#" class="flex w-[162px] items-center gap-[5px] pl-[5px]"><svg class="size-[12px]"><use href="#plan"/></svg>MẶT BẰNG KIẾN TRÚC TẦNG 1</a>
        <div class="flex h-[14px] w-[152px] items-center bg-white pl-[4px] text-[#333]"><a href="#" class="flex flex-1 items-center gap-[5px] font-bold"><svg class="size-[12px]"><use href="#house"/></svg>MẶT ĐỨNG KIẾN TRÚC 6-1</a><button aria-label="Close view" class="mr-[3px]"><svg class="size-[8px]" viewBox="0 0 8 8"><path d="M1 1l6 6M7 1L1 7" stroke="#222" stroke-width="1.500"/></svg></button></div>
        <a href="#" class="flex w-[95px] items-center gap-[5px] pl-[4px]"><svg class="size-[12px]"><use href="#plan"/></svg>Tầng Mái</a>
        <a href="#" class="flex items-center gap-[5px] pl-[4px]"><svg class="size-[12px]"><use href="#house"/></svg>MẶT ĐỨNG KIẾN TRÚC 1- 6</a>
        <svg class="mr-[4px] ml-auto h-[8px] w-[8px]" viewBox="0 0 8 8"><path d="M1 1h6v1.300H1zM1 3.500h6L4 7z" fill="#333"/></svg>
      </nav>
      <div class="flex min-h-0 flex-1 bg-white">
        <div class="min-w-0 flex-1 overflow-hidden">
          <svg class="h-[484px] w-[1149px] max-w-none" viewBox="251 147 1149 484" font-family="Liberation Serif, serif" fill="none">
            <!-- level lines -->
            <g stroke="#333">
              <path d="M501.500 238.500H1086" stroke-dasharray="16 3 11 7.500"/>
              <path d="M500 385.500H980M500 524.500H964"/>
              <path d="M989 385.500H1086M970 524.500h10M989 524.500H1086" stroke-dasharray="15 3.500 11 8"/>
            </g>
            <!-- side structure -->
            <path d="M871.500 386V631M942.500 386V631M871.500 402h72M943.500 386v16M952.500 525v3.500h-80M872 537.500h71M872 541.500h71" stroke="#222"/>
            <path d="M872.500 420v104M872.500 560v71" stroke="#000"/>
            <path d="M935.500 402v229" stroke="#999" stroke-width="1.400"/>
            <path d="M872 415.500h25M872 423.500h25M872 431.500h25M872 440.500h25M872 448.500h25M872 454.500h25M872 463.500h25M872 472.500h25" stroke="#444"/>
            <path d="M872 480h29" stroke="#111" stroke-width="2"/><path d="M897.500 402v78" stroke="#444"/><path d="M901 402v76" stroke="#111" stroke-width="1.500"/><path d="M899 402v76" stroke="#666" stroke-dasharray="2 3"/>
            <!-- roof -->
            <path d="M704 282H901V366H824z" fill="url(#tiles)" stroke="#111" stroke-width="1.300"/>
            <path d="M901 317.500h72V382H872v-14h29z" fill="url(#tiles)" stroke="#111" stroke-width="1.300"/>
            <path d="M900.500 282v84" stroke="#111" stroke-width="2"/>
            <path d="M632 236L826 364l-4 4L628 243 500 325v-7L624 236z" fill="url(#hatch)" stroke="#555" stroke-width=".8"/>
            <path d="M632 236L825 363M624 235L500 317" stroke="#111" stroke-width="2" stroke-dasharray="9 .8"/>
            <path d="M821.500 364h79.500v3.500h-79.500z" fill="#fff" stroke="#222" stroke-width=".9"/>
            <circle cx="628" cy="236" r="5.500" fill="#fff" stroke="#222" stroke-width="1.200"/>
            <path d="M863.500 382h108v3h-108z" fill="#fff" stroke="#222"/>
            <!-- windows and doors -->
            <use href="#window" x="526" y="405" width="80" height="90"/><use href="#window" x="526" y="544" width="80" height="90"/>
            <use href="#door" x="723" y="405" width="90" height="90"/><use href="#door" x="723" y="544" width="90" height="90"/>
            <path d="M505.500 421.500h6v22h-6zM505.500 560.500h9v21h-9zM505 564h6v14h-6zM463.500 600v31" stroke="#333"/>
            <!-- grid lines -->
            <g stroke="#c45fbd">
              <path d="M664.500 187v25M664.500 218v8M867.500 187v25M867.500 218v8"/>
              <path d="M664.500 234V631M867.500 234V631" stroke-dasharray="15 7 8 8"/>
            </g>
            <g stroke="#c9b5c9" stroke-width="1.400">
              <path d="M842 187v25M842 218v8M468.500 187v20M468.500 606v18"/>
              <path d="M842 234V631" stroke-dasharray="15 7 8 8"/>
            </g>
            <use href="#bubble" x="468" y="169.500"/><use href="#bubble" x="664.500" y="169.500"/><use href="#bubble" x="842" y="169.500"/><use href="#bubble" x="867.500" y="169.500"/>
            <g fill="#222" font-size="15" text-anchor="middle"><text x="468" y="174">4</text><text x="664" y="174">3</text><text x="842" y="174">2</text><text x="867" y="174">1</text></g>
            <!-- level marks -->
            <use href="#level" x="1079.500" y="238.500"/><use href="#level" x="1079.500" y="386.500"/><use href="#level" x="1079.500" y="525.500"/>
            <g fill="#222" font-size="8"><text x="1083" y="223">+11.950</text><text x="1085" y="371">+7.800</text><text x="1085" y="510">+3.900</text></g>
            <g fill="#222" font-size="10"><text x="1029" y="235">Tầng Mái</text><text x="1021" y="384">Tầng Áp Mái</text><text x="1035" y="522">Tầng 2</text></g>
          </svg>
        </div>
        <div class="w-[13px] shrink-0 bg-[#f0f0f0]"><svg class="mx-auto mt-[5px] h-[6px] w-[7px]" viewBox="0 0 7 6"><path d="M1 4.500L3.500 1.500 6 4.500" fill="none" stroke="#333" stroke-width="1.400"/></svg><div class="mt-[271px] h-[13px] w-[11px] bg-[#c8c8c8]"></div></div>
      </div>
      <!-- Navigation bar floating over the view -->
      <div class="absolute top-[16px] right-[15px] flex h-[87px] w-[26px] flex-col items-center rounded-[4px] border-2 border-[#c4c4c4] bg-[#f4f4f4]">
        <svg class="h-[83px] w-[24px] shrink-0" viewBox="0 1 24 83" fill="none" stroke="#999"><circle cx="19" cy="4.500" r="2.200"/><path d="M17.700 3.200l2.600 2.600M17.700 5.800l2.600-2.600" stroke-width=".7"/><path d="M14 29H9a5 5 0 0 1-5-5v-3a5 5 0 0 1 5-5h7v8" stroke-width="1.300"/><rect x="7.500" y="19.500" width="6" height="6" rx="1.500"/><text x="12" y="32" font-size="7" fill="#777" stroke="none" font-family="Open Sans">2D</text><path d="M10 38h4l-2 2.300z" fill="#777" stroke="none"/><path d="M2 43h20" stroke="#ccc"/><path d="M7 49h8v8H7z" fill="#aaa" stroke="none"/><circle cx="14.500" cy="57" r="2.800" fill="#f4f4f4"/><path d="M16.500 59l2.500 2.500"/><path d="M10 69h4l-2 2.300z" fill="#777" stroke="none"/><circle cx="19" cy="80.500" r="2.200"/><path d="M18 80.500h2"/></svg>
      </div>
    </section>
  </div>
</main>

<!-- Desktop visible beside the application window -->
<svg class="h-full w-[15px] shrink-0" viewBox="0 0 15 631" preserveAspectRatio="none">
  <defs><linearGradient id="edge"><stop offset="0" stop-color="#aaa"/><stop offset=".35" stop-color="#aaa" stop-opacity="0"/></linearGradient><linearGradient id="sky" x2="0" y2="1"><stop offset="0" stop-color="#a9cdee"/><stop offset="1" stop-color="#bcdcf4"/></linearGradient>
  <linearGradient id="trees" x2="0" y2="1"><stop offset="0" stop-color="#8a8d8c"/><stop offset=".3" stop-color="#111"/><stop offset=".75" stop-color="#222"/><stop offset="1" stop-color="#888"/></linearGradient></defs>
  <rect width="15" height="631" fill="#fff"/><rect y="168" width="15" height="22" fill="#ddd"/><rect y="190" width="15" height="148" fill="url(#sky)"/><path d="M0 330l4 6 4 2 3-5 4-1v166l-4 4v28H0z" fill="url(#trees)"/><rect y="531" width="15" height="100" fill="#d8d8d8"/><rect x="1" y="553" width="4" height="42" fill="#999"/><rect x="6" y="540" width="9" height="91" fill="#9b585c"/><path d="M7.500 540v91" stroke="#555" stroke-dasharray="1 4"/><rect width="15" height="631" fill="url(#edge)"/>
</svg>

<!-- Screen-share tab at the top edge -->
<div class="absolute top-0 left-[645px] h-[3px] w-[142px] rounded-b-[2px] border-x-2 border-b border-[#1c2733] bg-[#255d9a]"></div>

<!-- Type selector drop-down -->
<div class="absolute top-[201px] left-[6px] flex w-[503px] flex-col border border-[#888] bg-white shadow-[2px_2px_2px_rgba(0,0,0,0.45)] text-[#333]">
  <div class="flex h-[17px] items-center border-b border-[#ccc] pr-[4px]">
    <input aria-label="Search" placeholder="Search" class="h-[14px] min-w-0 flex-1 pl-[3px] italic placeholder:text-[#777]">
    <svg class="size-[10px]" viewBox="0 0 10 10"><circle cx="6" cy="4" r="2.900" fill="#e8f3fc" stroke="#2f7fc2" stroke-width="1.200"/><path d="M4 6L1 9" stroke="#333" stroke-width="1.500"/></svg>
  </div>
  <div class="flex h-[242px]">
    <ul class="min-w-0 flex-1 [&_span]:pt-px [&_span]:pl-[28px] [&_b]:pt-px [&_b]:pl-[2px] [&_b]:font-normal">
      <li class="h-[11px] overflow-hidden"><span class="-mt-[8px] block h-[17px] leading-[17px]">MrGGs_metric_bathtub_W70_D160_H50_1809</span></li>
      <li class="mx-px flex h-[25px] items-center bg-[#d7d7d7]"><svg class="size-[25px] border border-[#e8e8e8] bg-white"><use href="#beam-thin"/></svg><b>NGÓI VIỀN PHẢI -LINE BASE</b></li>
      <li class="flex h-[21px] items-center"><span>NGÓI VIỀN</span></li>
      <li class="mx-px flex h-[25px] items-center bg-[#d7d7d7]"><svg class="size-[25px] border border-[#e8e8e8] bg-white"><use href="#beam-thin"/></svg><b>NGÓI VIỀN TRÁI-LINE BASE</b></li>
      <li class="flex h-[21px] items-center"><span>NGÓI VIỀN TRÁI</span></li>
      <li class="mx-px flex h-[25px] items-center bg-[#d7d7d7]"><svg class="size-[25px] border border-[#e8e8e8] bg-white"><use href="#beam-thick"/></svg><b>NGÓI ÚP NÓC-LINE BASE-1 ĐẦU</b></li>
      <li class="flex h-[21px] items-center"><span class="h-[17px] w-full border border-[#4f8db8] bg-[#c9e7f8] leading-[15px]">NGÓI ÚP NÓC</span></li>
      <li class="mx-px flex h-[25px] items-center bg-[#d7d7d7]"><svg class="size-[25px] border border-[#e8e8e8] bg-white"><use href="#beam-thick"/></svg><b>NGÓI ÚP NÓC-LINE BASE-2 ĐẦU</b></li>
      <li class="flex h-[21px] items-center"><span class="h-[17px] w-full border border-[#3c7fb8] bg-[#b0d3f2] leading-[15px]">NGÓI ÚP NÓC</span></li>
      <li class="mx-px flex h-[25px] items-center bg-[#d7d7d7]"><svg class="size-[25px] border border-[#e8e8e8] bg-white" viewBox="0 0 25 25"><path d="M12 4l2 3 1 4 2 4-1 5-4 2-4-2-1-5 3-3 0-4z" fill="#222"/><path d="M10 5l3-1" stroke="#b060a0"/><path d="M8 17h8" stroke="#777"/></svg><b>Plant_8135</b></li>
      <li class="flex h-[21px] items-center"><span>Plant_8135</span></li>
    </ul>
    <div class="ml-px flex w-[12px] flex-col items-center justify-between bg-[#f0f0f0] py-[4px]">
      <svg class="h-[5px] w-[7px]" viewBox="0 0 7 5"><path d="M1 4l2.500-3L6 4" fill="none" stroke="#999"/></svg>
      <div class="mt-[111px] mb-auto h-[10px] w-full bg-[#ccc]"></div>
      <svg class="h-[5px] w-[7px]" viewBox="0 0 7 5"><path d="M1 1l2.500 3L6 1" fill="none" stroke="#999"/></svg>
    </div>
  </div>
  <h3 class="h-[14px] border-y border-[#d5d5d5] text-center leading-[13px] italic">Most Recently Used Types</h3>
  <ul class="pl-[3px] [&>li]:h-[18px] [&>li]:leading-[19px]">
    <li>a_palm2_7607 : a_palm2_7607</li>
    <li>3D_plant_2_8174 : 3D_plant_2_8174</li>
    <li>a_tree49_7611 : a_tree49_7611</li>
    <li>Plant_8135 : Plant_8135</li>
    <li>CON SON : CON SON</li>
    <li>MrGGs_metric_bathtub_W70_D160_H50_1809 : MrGGs_metric_bathtub_W70_D160_H50_1809</li>
    <li>Computer_Workstation : Computer-Workstation</li>
  </ul>
</div>

<!-- Pointer with click halo, and the red call-out frame -->
<div class="absolute top-[327px] left-[121px] size-[26px] rounded-full bg-[#e8dc3c]/80 mix-blend-multiply"></div>
<svg class="absolute top-[339px] left-[133px] h-[17px] w-[11px]" viewBox="0 0 11 17"><path d="M1.500 1.500v11.500l2.700-2.500 2 4.500 2-1-2-4.300h3.600z" fill="#fff" stroke="#444"/></svg>
<div class="absolute top-[274px] left-0 h-[59px] w-[562px] border-2 border-[#f5494b] shadow-[1px_2px_2px_rgba(0,0,0,0.4),inset_1px_2px_2px_rgba(0,0,0,0.35)]"></div>

<!-- Watermark -->
<div class="absolute top-0 right-0 flex h-[73px] w-[82px] flex-col items-center justify-end bg-[#4585a8]/90 pb-[7px] text-[#e6f2fb]">
  <svg class="h-[35px] w-[46px]" viewBox="0 0 46 35"><path d="M12 2h22v21l-11 8-11-8zM12 9h22" fill="none" stroke="#e6f2fb" stroke-width="1.500"/><path d="M1 10h11v8h-2v3H1l3-5zM45 10H34v8h2v3h9l-3-5z" fill="#e6f2fb"/><text x="23" y="22" text-anchor="middle" font-family="Liberation Serif" font-size="12" fill="#e6f2fb">G</text></svg>
  <span class="font-['Liberation_Serif',serif] text-[14px] leading-[18px]">GIZENTO</span>
</div>
</body>
</html>
